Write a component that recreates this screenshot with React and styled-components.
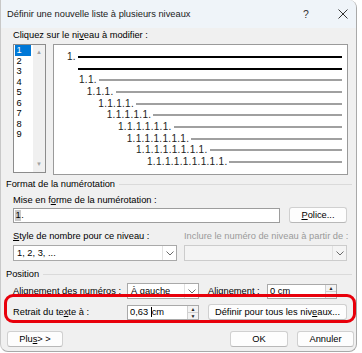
import React from 'react'
import styled, { createGlobalStyle } from 'styled-components'

const GlobalStyle = createGlobalStyle`
  html, body { margin: 0; padding: 0; background: #fff; }
  body { font-family: "Liberation Sans", Arial, sans-serif; }
`

const levels = [
  { num: '1.', indent: 13, dark: true },
  { num: '', indent: 24, dark: true },
  { num: '1.1.', indent: 25 },
  { num: '1.1.1.', indent: 32.7 },
  { num: '1.1.1.1.', indent: 44.3 },
  { num: '1.1.1.1.1.', indent: 52.7 },
  { num: '1.1.1.1.1.1.', indent: 64 },
  { num: '1.1.1.1.1.1.1.', indent: 72.7 },
  { num: '1.1.1.1.1.1.1.1.', indent: 82 },
  { num: '1.1.1.1.1.1.1.1.1.', indent: 93 },
]

const Chevron = () => (
  <svg width="8" height="5" viewBox="0 0 8 5">
    <path d="M0.5 0.5 L4 4 L7.5 0.5" fill="none" stroke="#6b6b6b" strokeWidth="1" />
  </svg>
)

function Select({ value, width, disabled }) {
  return (
    <SelectBox $width={width} $disabled={disabled}>
      <SelectValue>{value}</SelectValue>
      <SelectButton><Chevron /></SelectButton>
    </SelectBox>
  )
}

function Spin({ children, width }) {
  return (
    <SpinBox $width={width}>
      <SpinValue>{children}</SpinValue>
      <SpinButtons>
        <SpinArrow>▲</SpinArrow>
        <SpinArrow>▼</SpinArrow>
      </SpinButtons>
    </SpinBox>
  )
}

export default function App() {
  return (
    <>
      <GlobalStyle />
      <Window>
        <TitleBar>
          <Title>Définir une nouvelle liste à plusieurs niveaux</Title>
          <HelpButton>?</HelpButton>
          <CloseButton>
            <svg width="10" height="10" viewBox="0 0 10 10">
              <path d="M0.5 0.5 L9.5 9.5 M9.5 0.5 L0.5 9.5" stroke="#333" strokeWidth="1" />
            </svg>
          </CloseButton>
        </TitleBar>

        <Body>
          <Indented>
            <Label $h={15}>Cliquez sur le ni<u>v</u>eau à modifier :</Label>
            <TopRow>
              <ListBox>
                <ListItems>
                  {[1, 2, 3, 4, 5, 6, 7, 8, 9].map((n) => (
                    <ListItem key={n} $selected={n === 1}>{n}</ListItem>
                  ))}
                </ListItems>
                <ScrollTrack>
                  <ScrollArrow>▲</ScrollArrow>
                  <ScrollArrow>▼</ScrollArrow>
                </ScrollTrack>
              </ListBox>
              <Preview>
                {levels.map((l, i) => (
                  <PreviewRow key={i} $indent={l.indent}>
                    {l.num && <Num>{l.num}</Num>}
                    <Rule $dark={l.dark} />
                  </PreviewRow>
                ))}
              </Preview>
            </TopRow>
          </Indented>

          <GroupHead $mt={2}>Format de la numérotation</GroupHead>
          <Indented>
            <Label $mt={2}>Mise en f<u>o</u>rme de la numérotation :</Label>
            <Row $mt={0}>
              <TextInput $width={267}>
                <Selected>1</Selected>.
              </TextInput>
              <Button $width={58} $ml={9}><u>P</u>olice...</Button>
            </Row>
            <Row $mt={5}>
              <Label $width={171}><u>S</u>tyle de nombre pour ce niveau :</Label>
              <Label $muted>Inclure le numéro de niveau à partir de :</Label>
            </Row>
            <Row $mt={1}>
              <Select value="1, 2, 3, ..." width={164} />
              <Gap $w={7} />
              <Select value="" width={163} disabled />
            </Row>
          </Indented>

          <GroupHead $mt={6}>Position</GroupHead>
          <Indented>
            <Row $mt={2}>
              <Label $width={114}>Alignement des nu<u>m</u>éros :</Label>
              <Select value="À gauche" width={72} />
              <Label $width={59} $ml={9}><u>A</u>lignement :</Label>
              <Spin width={70}>0 cm</Spin>
            </Row>
            <Row $mt={5}>
              <Label $width={114}>Retrait du te<u>x</u>te à :</Label>
              <Spin width={72}>0,63 <Caret />cm</Spin>
              <Button $width={139} $ml={9}>Définir pour tous les niv<u>e</u>aux...</Button>
            </Row>
          </Indented>

          <BottomRow>
            <Button $width={56}>Plu<u>s</u> &gt; &gt;</Button>
            <Spacer />
            <Button $width={58}><strong>OK</strong></Button>
            <Button $width={57} $ml={9}>Annuler</Button>
          </BottomRow>
        </Body>

        <Highlight />
      </Window>
    </>
  )
}

const Window = styled.div`
  position: relative;
  width: 357px;
  height: 352px;
  box-sizing: border-box;
  border: 1px solid #a9a9a9;
  border-top: none;
  border-left-color: #c8c8c8;
  border-radius: 0 8px 8px 8px;
  background: #f0f0f0;
  overflow: hidden;
  font-size: 9.3px;
  color: #000;
`

const TitleBar = styled.div`
  height: 28px;
  display: flex;
  align-items: center;
  padding: 0 3px 0 6px;
  background: #eff4f9;
`

const Title = styled.div`
  flex: 1;
  font-size: 9.3px;
  color: #1a1a1a;
`

const HelpButton = styled.div`
  width: 20px;
  text-align: center;
  font-size: 10.5px;
  color: #333;
`

const CloseButton = styled.div`
  width: 20px;
  margin-left: 17px;
  display: flex;
  justify-content: center;
`

const Body = styled.div`
  padding: 0 4px 0 5px;
  display: flex;
  flex-direction: column;
`

const Indented = styled.div`
  padding-left: 7px;
  display: flex;
  flex-direction: column;
`

const Label = styled.div`
  height: ${(p) => p.$h || 14}px;
  line-height: ${(p) => p.$h || 14}px;
  margin-top: ${(p) => p.$mt || 0}px;
  margin-left: ${(p) => p.$ml || 0}px;
  width: ${(p) => (p.$width ? `${p.$width}px` : 'auto')};
  flex-shrink: 0;
  white-space: nowrap;
  color: ${(p) => (p.$muted ? '#9a9a9a' : '#000')};
  & u { text-underline-offset: 1px; }
`

const TopRow = styled.div`
  display: flex;
  align-items: flex-start;
  margin-top: 1px;
`

const ListBox = styled.div`
  width: 33px;
  height: 129px;
  box-sizing: border-box;
  border: 1px solid #8c8c8c;
  background: #fff;
  display: flex;
`

const ListItems = styled.div`
  flex: 1;
  padding-left: 1px;
`

const ListItem = styled.div`
  width: 16px;
  height: 10.5px;
  line-height: 10.5px;
  box-sizing: border-box;
  padding-left: 1.5px;
  font-size: 9.3px;
  background: ${(p) => (p.$selected ? '#0078d7' : 'transparent')};
  color: ${(p) => (p.$selected ? '#fff' : '#000')};
`

const ScrollTrack = styled.div`
  width: 12px;
  background: #f0f0f0;
  display: flex;
  flex-direction: column;
  justify-content: space-between;
  align-items: center;
  padding: 3px 0 4px;
`

const ScrollArrow = styled.span`
  font-size: 6px;
  color: #a3a3a3;
  line-height: 8px;
`

const Preview = styled.div`
  margin-left: 7px;
  width: 295px;
  height: 131px;
  box-sizing: border-box;
  border: 1px solid #9a9a9a;
  background: #fff;
  padding: 6.15px 5px 0 0;
  display: flex;
  flex-direction: column;
`

const PreviewRow = styled.div`
  height: 11.7px;
  display: flex;
  align-items: center;
  padding-left: ${(p) => p.$indent}px;
`

const Num = styled.span`
  font-size: 10px;
  letter-spacing: 0.3px;
  line-height: 1;
  color: #222;
  margin-right: 2px;
`

const Rule = styled.div`
  flex: 1;
  height: ${(p) => (p.$dark ? 2.3 : 2)}px;
  background: ${(p) => (p.$dark ? '#000' : '#a0a0a0')};
`

const GroupHead = styled.div`
  display: flex;
  align-items: center;
  gap: 4px;
  height: 14px;
  margin-top: ${(p) => p.$mt}px;
  white-space: nowrap;
  &::after {
    content: '';
    flex: 1;
    height: 1px;
    background: #dadada;
  }
`

const Row = styled.div`
  display: flex;
  align-items: center;
  height: 16px;
  margin-top: ${(p) => p.$mt}px;
`

const Gap = styled.div`
  width: ${(p) => p.$w}px;
  flex-shrink: 0;
`

const Spacer = styled.div`
  flex: 1;
`

const TextInput = styled.div`
  width: ${(p) => p.$width}px;
  height: 15px;
  box-sizing: border-box;
  border: 1px solid #9d9d9d;
  background: #fff;
  display: flex;
  align-items: stretch;
  padding: 1px 0 1px 1px;
  line-height: 11px;
`

const Selected = styled.span`
  background: #c8c8c8;
  padding: 0 0.5px;
`

const Button = styled.div`
  width: ${(p) => p.$width}px;
  height: 16px;
  margin-left: ${(p) => p.$ml || 0}px;
  box-sizing: border-box;
  border: 1px solid #d0d0d0;
  border-bottom-color: #b8b8b8;
  border-radius: 3px;
  background: #fdfdfd;
  display: flex;
  align-items: center;
  justify-content: center;
  white-space: nowrap;
  flex-shrink: 0;
  & strong { font-weight: normal; }
`

const SelectBox = styled.div`
  width: ${(p) => p.$width}px;
  height: 16px;
  box-sizing: border-box;
  border: 1px solid ${(p) => (p.$disabled ? '#cccccc' : '#a9a9a9')};
  background: ${(p) => (p.$disabled ? '#f4f4f4' : '#fff')};
  display: flex;
  flex-shrink: 0;
`

const SelectValue = styled.div`
  flex: 1;
  padding-left: 3px;
  line-height: 14px;
  white-space: nowrap;
`

const SelectButton = styled.div`
  width: 13px;
  border-left: 1px solid #e2e2e2;
  display: flex;
  align-items: center;
  justify-content: center;
`

const SpinBox = styled.div`
  width: ${(p) => p.$width}px;
  height: 15px;
  box-sizing: border-box;
  border: 1px solid #a9a9a9;
  background: #fff;
  display: flex;
  flex-shrink: 0;
`

const SpinValue = styled.div`
  flex: 1;
  padding-left: 2px;
  line-height: 13px;
  display: flex;
  align-items: center;
  white-space: pre;
`

const Caret = styled.span`
  display: inline-block;
  width: 1px;
  height: 10px;
  background: #000;
`

const SpinButtons = styled.div`
  width: 10px;
  border-left: 1px solid #d0d0d0;
  background: #f3f3f3;
  display: flex;
  flex-direction: column;
`

const SpinArrow = styled.div`
  flex: 1;
  font-size: 5px;
  line-height: 6px;
  text-align: center;
  color: #222;
  & + & { border-top: 1px solid #d0d0d0; }
`

const BottomRow = styled.div`
  display: flex;
  align-items: center;
  height: 16px;
  margin-top: 11px;
  padding-left: 1px;
  margin-right: -2px;
`

const Highlight = styled.div`
  position: absolute;
  left: 3px;
  top: 294px;
  width: 352px;
  height: 29px;
  box-sizing: border-box;
  border: 3px solid #e8000b;
  border-radius: 9px;
  pointer-events: none;
`
